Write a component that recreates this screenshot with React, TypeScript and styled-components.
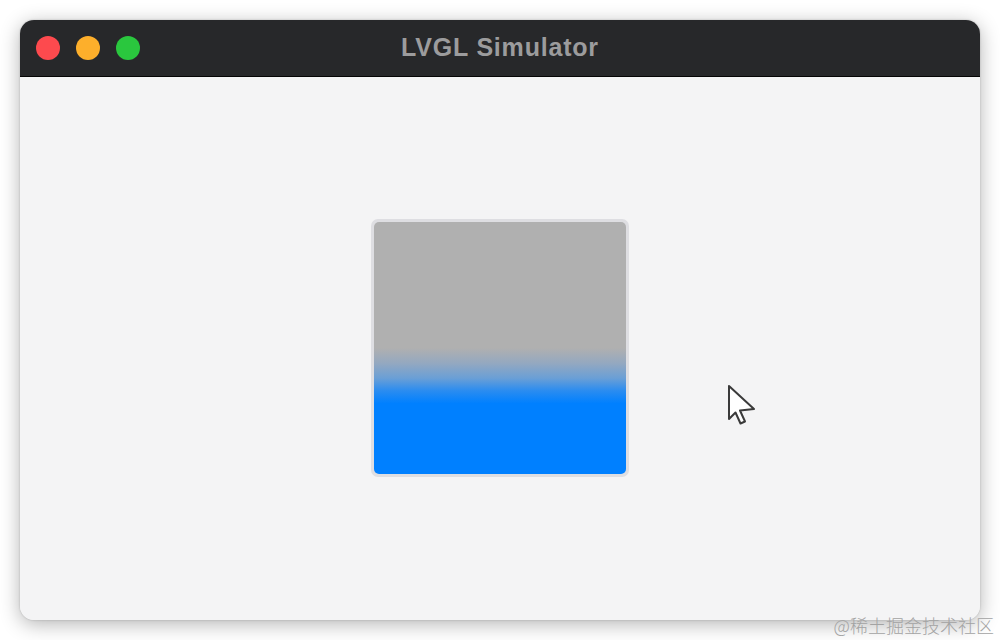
import styled, { createGlobalStyle } from 'styled-components';

const GlobalStyle = createGlobalStyle`
  html, body {
    margin: 0;
    padding: 0;
    background: #ffffff;
  }
  body {
    font-family: "Liberation Sans", Arial, sans-serif;
  }
`;

export default function App() {
  return (
    <Page>
      <GlobalStyle />
      <Window>
        <TitleBar>
          <Lights>
            <Light color="#fd4a4e" />
            <Light color="#fdaf2b" />
            <Light color="#2ac73e" />
          </Lights>
          <Title>LVGL Simulator</Title>
        </TitleBar>
        <Screen>
          <Panel>
            <Fill />
          </Panel>
          <Pointer width="30" height="42" viewBox="0 0 30 42">
            <path
              d="M2 2 L2 35 L8.5 28.5 L13.5 39.5 L18 37.5 L13 26.5 L27 25 Z"
              fill="#ffffff"
              stroke="#3a3a3a"
              strokeWidth="2"
              strokeLinejoin="round"
            />
          </Pointer>
        </Screen>
      </Window>
      <Watermark>@稀土掘金技术社区</Watermark>
    </Page>
  );
}

const Page = styled.div`
  position: relative;
  width: 1000px;
  height: 640px;
  padding: 20px;
  box-sizing: border-box;
  overflow: hidden;
`;

const Window = styled.div`
  width: 960px;
  height: 600px;
  display: flex;
  flex-direction: column;
  border-radius: 14px;
  overflow: hidden;
  background: #f4f4f5;
  box-shadow: 0 4px 20px rgba(0, 0, 0, 0.3), 0 0 2px rgba(0, 0, 0, 0.22);
`;

const TitleBar = styled.div`
  position: relative;
  height: 56px;
  flex: none;
  display: flex;
  align-items: center;
  justify-content: center;
  background: #27282a;
  border-bottom: 1px solid #050505;
`;

const Lights = styled.div`
  position: absolute;
  left: 16px;
  top: 16px;
  display: flex;
  gap: 16px;
`;

const Light = styled.span<{ color: string }>`
  width: 24px;
  height: 24px;
  border-radius: 50%;
  background: ${(p) => p.color};
`;

const Title = styled.h1`
  margin: 0 0 2px;
  font-family: "Liberation Sans", Arial, sans-serif;
  font-size: 25px;
  font-weight: 700;
  color: #9c9c9d;
  letter-spacing: 0.8px;
`;

const Screen = styled.div`
  position: relative;
  flex: 1;
  display: flex;
  align-items: center;
  justify-content: center;
  background: #f4f4f5;
`;

const Panel = styled.div`
  width: 258px;
  height: 258px;
  box-sizing: border-box;
  padding: 3px;
  border-radius: 7px;
  background: #dedee2;
  margin-top: -1px;
`;

const Fill = styled.div`
  width: 100%;
  height: 100%;
  border-radius: 5px;
  background: linear-gradient(
    to bottom,
    #b0b0b0 0%,
    #b0b0b0 50%,
    #94a8c0 56%,
    #6a9fd6 62%,
    #2a8cf0 67%,
    #0080ff 72%,
    #0080ff 100%
  );
`;

const Pointer = styled.svg`
  position: absolute;
  left: 707px;
  top: 307px;
`;

const Watermark = styled.div`
  position: absolute;
  right: 6px;
  bottom: 6px;
  font-family: "Noto Sans CJK SC", "Liberation Sans", sans-serif;
  font-size: 18px;
  font-weight: 300;
  color: #a3a3a3;
  line-height: 1;
`;
